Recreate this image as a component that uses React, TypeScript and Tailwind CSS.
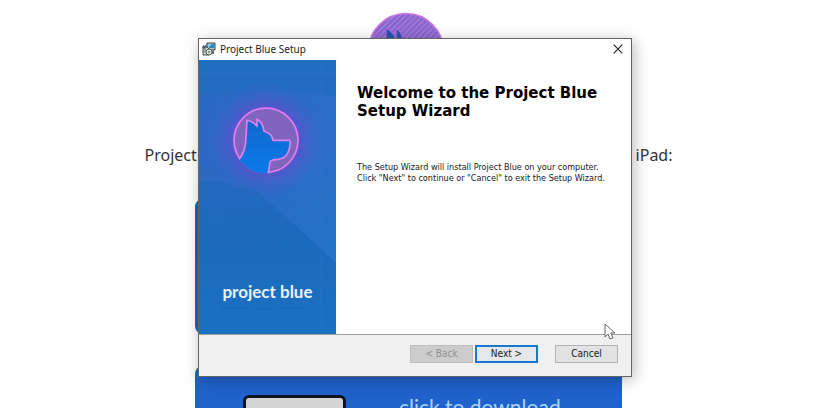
import React from "react";

function HeroLogo() {
  return (
    <svg viewBox="0 0 80 80" className="h-20 w-20" aria-hidden="true">
      <defs>
        <pattern id="stripes" width="4" height="4" patternUnits="userSpaceOnUse" patternTransform="rotate(45)">
          <rect width="4" height="4" fill="#8b66cf" />
          <rect width="1" height="4" fill="#a386dc" />
        </pattern>
      </defs>
      <circle cx="37" cy="39" r="37.5" fill="url(#stripes)" stroke="#cf72e2" strokeWidth="1.5" />
      <path d="M14 60 C21 46 16 32 17 16 Q24 19 27 27 L27 16 Q34 20 34 30 Q42 34 46 44 H64 Q62 60 41 62 L40 76 Q21 76 14 60Z" fill="#2458ad" stroke="#a568dc" strokeWidth="1.5" />
    </svg>
  );
}

function InstallerIcon() {
  return (
    <svg viewBox="0 0 14 14" className="h-[14px] w-[14px]" aria-hidden="true">
      <path d="M5 1h8v7H5z" fill="#b8c4c8" stroke="#34434d" />
      <path d="M7 2h5v4H7z" fill="#168dcc" />
      <path d="M7 2h3L7 5z" fill="#7ad4ee" />
      <path d="M12 8v4h-2V9z" fill="#647078" />
      <path d="M1 5h4l2 2v6H1z" fill="#d8ddd5" stroke="#404b4c" />
      <path d="M1 3l2 1 1-2 1 3-2 2-3-1z" fill="#59666a" />
      <circle cx="7" cy="10" r="3" fill="#e3e7db" stroke="#4c5b56" />
      <circle cx="7" cy="10" r="1" fill="#4b7f6b" />
      <path d="M2 8h2M2 10h2" stroke="#5b6b6d" />
    </svg>
  );
}

function BannerArt() {
  return (
    <svg viewBox="0 0 137 273" preserveAspectRatio="none" className="absolute inset-0 h-full w-full" aria-hidden="true">
      <defs>
        <linearGradient id="banner" x1="0" y1="0" x2="0" y2="1">
          <stop offset="0" stopColor="#1f6ec2" />
          <stop offset="0.3" stopColor="#2a68c4" />
          <stop offset="0.65" stopColor="#1b6abb" />
          <stop offset="1" stopColor="#1b70c2" />
        </linearGradient>
        <radialGradient id="glow">
          <stop offset="0.45" stopColor="#7a42d0" stopOpacity="0.85" />
          <stop offset="0.62" stopColor="#5a54cb" stopOpacity="0.6" />
          <stop offset="1" stopColor="#3464c8" stopOpacity="0" />
        </radialGradient>
        <linearGradient id="dog" x1="0" y1="0" x2="0" y2="1">
          <stop offset="0" stopColor="#1268cb" />
          <stop offset="1" stopColor="#087cec" />
        </linearGradient>
        <linearGradient id="ray" x1="0" y1="0" x2="1" y2="1">
          <stop offset="0" stopColor="#3e62c9" stopOpacity="0.2" />
          <stop offset="1" stopColor="#287bd2" stopOpacity="0.6" />
        </linearGradient>
        <clipPath id="disc"><circle cx="67" cy="80" r="33" /></clipPath>
      </defs>
      <rect width="137" height="273" fill="url(#banner)" />
      <path d="M0 34 Q70 26 137 36 V202 L56 128 Q30 122 0 120Z" fill="url(#ray)" />
      <path d="M17 0V273M122 0V273M0 14H137M0 119H137M0 224H137" stroke="#4a8fd4" strokeOpacity="0.14" />
      <path d="M37 160V224M79 160V224M17 183H60M17 204H122" stroke="#4a8fd4" strokeOpacity="0.08" />
      <path d="M22 247H50M56 248H76M82 247H108" stroke="#155a9e" strokeOpacity="0.4" />
      <circle cx="67" cy="80" r="60" fill="url(#glow)" />
      <circle cx="67" cy="80" r="32" fill="#8065bf" stroke="#e67bf2" strokeWidth="1.7" />
      <g clipPath="url(#disc)">
        <path d="M38 102 Q47 92 47 76 L48 60 Q54 61 58 66 L58 59 Q64 62 65 71 Q73 73 74 80 H88 Q92 79 91 84 Q90 98 79 99 Q72 99 71 102 L69 118 H40Z" fill="url(#dog)" />
        <path d="M40 99 Q47 91 47 76 L48 60 Q54 61 58 66 L58 59 Q64 62 65 71 Q73 73 74 80 H88 Q92 79 91 84 Q90 98 79 99 Q72 99 71 102 L69 114" fill="none" stroke="#df80ef" strokeWidth="1.7" strokeLinejoin="round" />
      </g>
    </svg>
  );
}

function DownloadPage() {
  return (
    <main className="flex flex-col items-center pr-[23px] pt-3">
      <HeroLogo />
      <p className="mt-[51px] flex w-[528px] justify-between font-['Noto_Sans',sans-serif] text-[16px] leading-6 text-[#333333]">
        <span>Project</span>
        <span>iPad:</span>
      </p>
      <div className="mt-8 flex w-[427px] flex-col gap-8">
        <div className="h-[135px] rounded-lg bg-[#2062c6]" />
        <a href="#download" className="flex h-[136px] items-start rounded-lg bg-[#2062cb] pl-12 pt-[29px]">
          <span className="h-20 w-[103px] rounded-md border-[3px] border-[#0b1420] bg-[#d4d4d4]" />
          <span className="ml-[53px] font-['Lato',sans-serif] text-[21px] leading-6 text-[#a9d5ff]">click to download</span>
        </a>
      </div>
    </main>
  );
}

function SetupWindow() {
  return (
    <section
      aria-label="Project Blue Setup"
      className="absolute left-[198px] top-[38px] flex w-[434px] flex-col border border-[#666666] bg-white shadow-[2px_3px_14px_rgba(0,0,0,0.28)]"
    >
      <header className="flex h-[21px] items-center gap-1 pb-1 pl-[3px] pr-2 pt-[2px]">
        <InstallerIcon />
        <span className="font-['Noto_Sans',sans-serif] text-[10px] leading-4 text-[#1c1c1c]">Project Blue Setup</span>
        <button type="button" aria-label="Close" className="ml-auto flex h-4 w-[10px] items-center justify-center">
          <svg viewBox="0 0 10 10" className="h-[10px] w-[10px]" aria-hidden="true">
            <path d="M.7.7l8.6 8.6M9.3.7L.7 9.3" stroke="#222" strokeWidth="1.1" />
          </svg>
        </button>
      </header>
      <div className="flex h-[274px]">
        <div className="relative w-[137px] shrink-0">
          <BannerArt />
          <p className="relative pt-[220px] text-center font-['Lato',sans-serif] text-[17px] font-bold leading-6 text-[#e8f4ff]">project blue</p>
        </div>
        <div className="flex-1 pl-[21px] pt-6 text-black">
          <h1 className="font-['DejaVu_Sans',sans-serif] text-[15px] font-bold leading-[18px]">
            Welcome to the Project Blue
            <br />
            Setup Wizard
          </h1>
          <p className="mt-[42px] whitespace-nowrap font-['DejaVu_Sans_Condensed','DejaVu_Sans',sans-serif] text-[9px] leading-[11px] text-[#202020]">
            The Setup Wizard will install Project Blue on your computer.
            <br />
            Click "Next" to continue or "Cancel" to exit the Setup Wizard.
          </p>
        </div>
      </div>
      <footer className="flex h-[42px] items-start justify-end border-t border-[#a0a0a0] bg-[#f0f0f0] pr-[13px] pt-[10px] font-['DejaVu_Sans_Condensed','DejaVu_Sans',sans-serif] text-[10px] leading-none text-[#202020]">
        <button type="button" disabled className="h-[18px] w-[63px] border border-[#bfbfbf] bg-[#cccccc] text-[#8f8f8f]">&lt; Back</button>
        <button type="button" className="ml-[2px] h-[18px] w-[63px] border-2 border-[#1778d0] bg-[#e5e7e9]">Next &gt;</button>
        <button type="button" className="ml-[17px] h-[18px] w-[63px] border border-[#b3b3b3] bg-[#e2e2e2]">Cancel</button>
      </footer>
      <svg viewBox="0 0 12 18" className="absolute bottom-[35px] right-[15px] h-[18px] w-3" aria-hidden="true">
        <path d="M1 1V14L4 11L6 16L9 15L7 10H11Z" fill="#fff" stroke="#666" />
      </svg>
    </section>
  );
}

export default function App() {
  return (
    <div className="relative h-screen overflow-hidden bg-white">
      <DownloadPage />
      <SetupWindow />
    </div>
  );
}
